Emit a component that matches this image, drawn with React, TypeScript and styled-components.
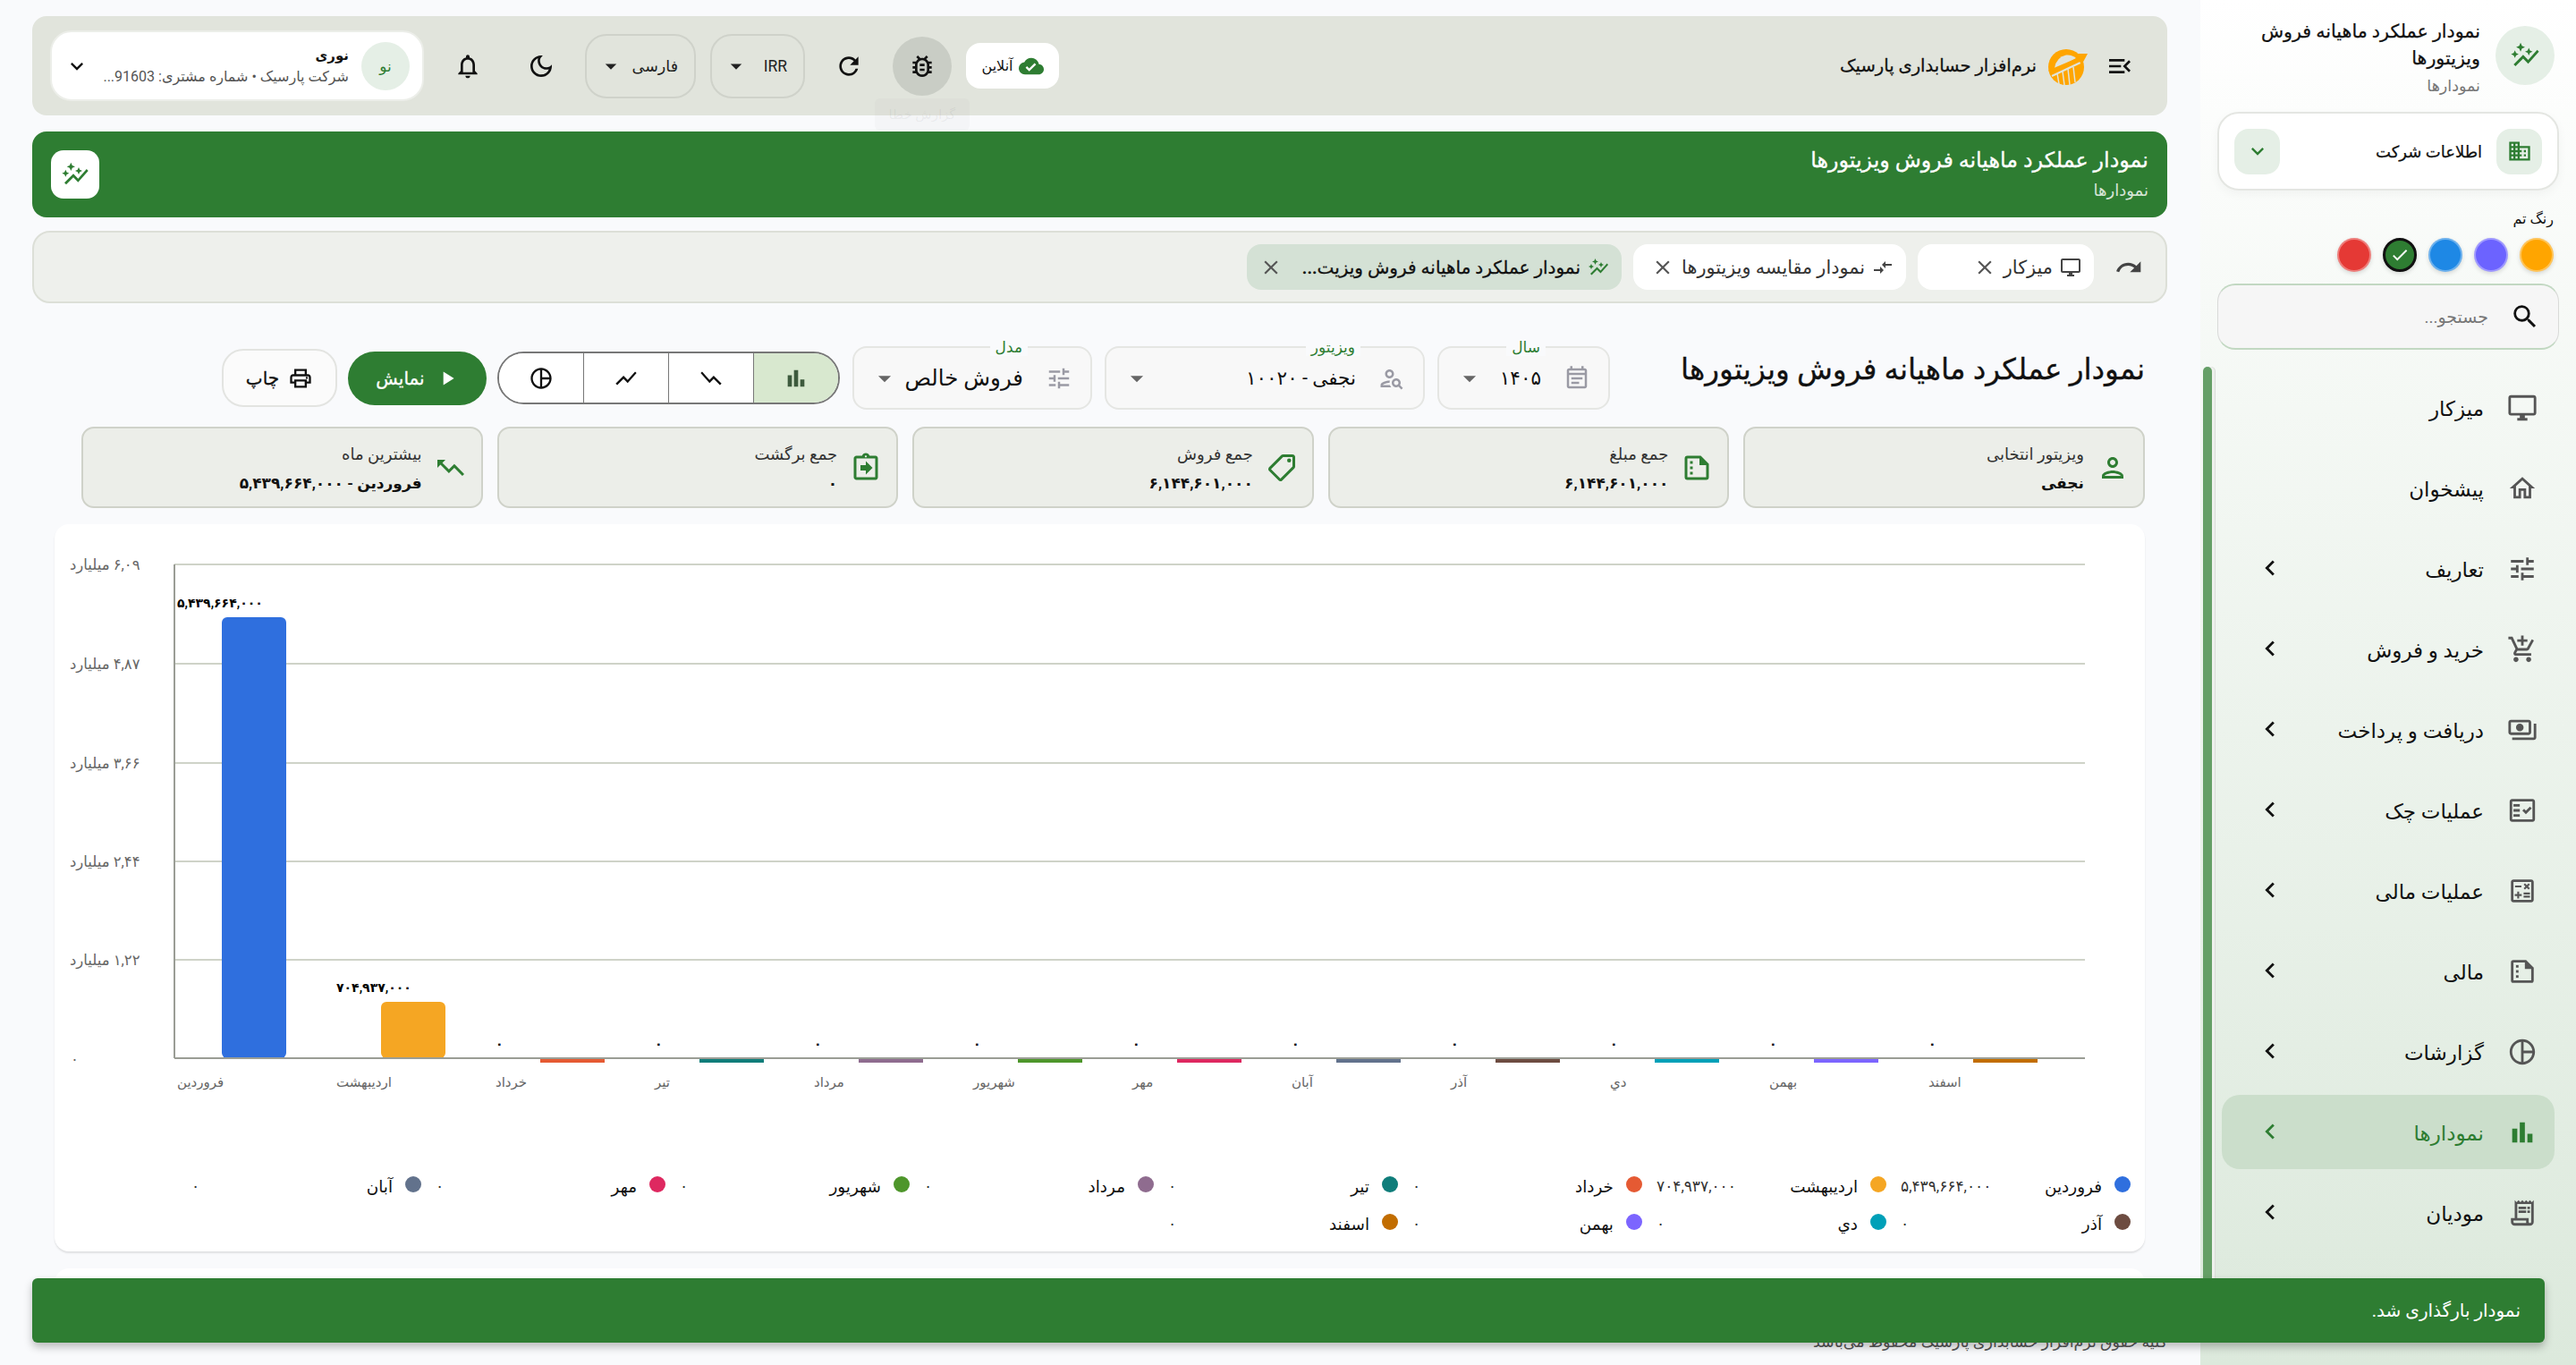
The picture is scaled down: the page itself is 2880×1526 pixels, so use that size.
import React from "react";
import styled, { createGlobalStyle } from "styled-components";
import {
  MdAutoGraph, MdBarChart, MdBusiness, MdCheck, MdChevronLeft, MdClose, MdCloudDone, MdCompareArrows,
  MdExpandMore, MdArrowDropDown, MdMenuOpen, MdNotificationsNone, MdOutlineAddShoppingCart, MdOutlineAssignmentReturn,
  MdOutlineBugReport, MdOutlineCalculate, MdOutlineDarkMode, MdOutlineDesktopWindows, MdOutlineEventNote, MdOutlineFactCheck,
  MdOutlineHome, MdOutlineLocalOffer, MdOutlinePayments, MdOutlinePerson, MdOutlinePersonSearch, MdOutlinePieChart,
  MdOutlinePrint, MdOutlineReceiptLong, MdOutlineTune, MdPlayArrow, MdRedo, MdRefresh, MdSearch,
  MdShowChart, MdTrendingUp, MdKeyboardArrowDown,
} from "react-icons/md";

const FONT = `Roboto, "Noto Sans", "DejaVu Sans", sans-serif`;

const Global = createGlobalStyle`
  html, body { margin: 0; padding: 0; height: 100%; background: #f9fafc; }
  body { font-family: ${FONT}; color: #111; overflow: hidden; }
  * { box-sizing: border-box; }
`;

const Page = styled.div`
  display: flex;
  width: 2880px;
  height: 1526px;
  overflow: hidden;
`;

/* ---------- Sidebar ---------- */
const Sidebar = styled.aside`
  width: 420px;
  height: 1526px;
  flex: none;
  background: linear-gradient(180deg, #ffffff 0%, #f4f8f4 30%, #dce9dc 100%);
  padding: 20px 19px 0 19px;
  display: flex;
  flex-direction: column;
`;
const BrandRow = styled.div`
  display: flex;
  gap: 17px;
  align-items: flex-start;
  padding: 9px 5px 0 0;
  height: 105px;
`;
const BrandCircle = styled.div`
  width: 66px;
  height: 66px;
  flex: none;
  border-radius: 50%;
  background: #e5efe6;
  color: #2e7d32;
  display: grid;
  place-items: center;
`;
const BrandText = styled.div`
  margin-top: -9px;
  width: 265px;
`;
const BrandTitle = styled.div`
  font-size: 20.6px;
  font-weight: 500;
  line-height: 30px;
  -webkit-text-stroke: 0.25px #111;
`;
const BrandSub = styled.div`
  font-size: 17.5px;
  line-height: 32px;
  color: #777;
`;
const CompanyCard = styled.div`
  height: 88px;
  background: #fff;
  border: 2px solid #e4e6e2;
  border-radius: 24px;
  box-shadow: 0 4px 12px rgba(0, 0, 0, 0.04);
  padding: 0 17px;
  display: flex;
  align-items: center;
  gap: 16px;
`;
const Tile = styled.div`
  width: 51px;
  height: 51px;
  border-radius: 16px;
  background: #e5efe6;
  color: #2e7d32;
  display: grid;
  place-items: center;
  flex: none;
`;
const CompanyName = styled.div`
  flex: 1;
  font-size: 18px;
  font-weight: 500;
  -webkit-text-stroke: 0.25px #111;
`;
const ThemeLabel = styled.div`
  font-size: 16px;
  line-height: 22px;
  margin: 21px 6px 0 0;
`;
const Swatches = styled.div`
  display: flex;
  gap: 13px;
  margin: 10px 6px 0 0;
`;
const Swatch = styled.div<{ $c: string; $on?: boolean }>`
  width: 38px;
  height: 38px;
  border-radius: 50%;
  background: ${(p) => p.$c};
  border: 2px solid ${(p) => (p.$on ? "#111" : "rgba(255,255,255,.35)")};
  ${(p) => (p.$on ? "border-width: 3px;" : "")}
  box-shadow: 0 2px 5px rgba(0, 0, 0, 0.14);
  display: grid;
  place-items: center;
  color: #fff;
`;
const SearchBox = styled.div`
  height: 74px;
  margin-top: 13px;
  border-radius: 20px;
  background: #f6f6f6;
  border: 1px solid #d9dad8;
  border-top: 2px solid #c2d8c2;
  border-bottom: 2px solid #c2d8c2;
  display: flex;
  align-items: center;
  gap: 24px;
  padding-right: 20px;
  color: #111;
`;
const SearchHint = styled.span`
  font-size: 19px;
  color: #777;
`;
const NavWrap = styled.nav`
  position: relative;
  margin: 19px 0 0 0;
  padding: 4px 5px 0 5px;
  flex: 1;
  display: flex;
  flex-direction: column;
  gap: 7px;
`;
const ScrollThumb = styled.div`
  position: absolute;
  left: -16px;
  top: 0;
  width: 10px;
  height: 1050px;
  border-radius: 5px;
  background: #659f66;
  box-shadow: 3px 0 0 #eef1ed, 4px 0 0 #d9dcd8;
`;
const NavItem = styled.div<{ $on?: boolean }>`
  height: 83px;
  flex: none;
  border-radius: 20px;
  background: ${(p) => (p.$on ? "#cbdecb" : "transparent")};
  color: ${(p) => (p.$on ? "#2e7d32" : "#111")};
  padding: 0 19px 0 37px;
  display: flex;
  align-items: center;
  gap: 26px;
`;
const NavIcon = styled.span<{ $on?: boolean }>`
  width: 34px;
  height: 34px;
  color: ${(p) => (p.$on ? "#2e7d32" : "#555")};
  flex: none;
  display: block;
`;
const NavLabel = styled.span`
  flex: 1;
  font-size: 23px;
  line-height: 30px;
  padding-top: 4px;
`;
const NavArrow = styled.span`
  width: 34px;
  height: 34px;
  flex: none;
  display: block;
  margin-top: -2px;
`;

/* ---------- Main ---------- */
const Main = styled.main`
  width: 2460px;
  flex: none;
  padding: 18px 37px 0 36px;
  display: flex;
  flex-direction: column;
  position: relative;
`;
const TopBar = styled.header`
  height: 111px;
  flex: none;
  background: #e1e4dc;
  border-radius: 16px;
  padding: 0 20px 0 20px;
  display: flex;
  align-items: center;
`;
const MenuBtn = styled.span`
  margin: 0 17px 0 20px;
  display: block;
  height: 32px;
`;
const AppName = styled.div`
  font-size: 19.5px;
  font-weight: 500;
  margin-right: 13px;
  white-space: nowrap;
  -webkit-text-stroke: 0.3px #111;
`;
const TopTools = styled.div`
  margin-right: auto;
  display: flex;
  align-items: center;
  gap: 16px;
`;
const OnlineChip = styled.div`
  width: 104px;
  height: 51px;
  background: #fff;
  border-radius: 16px;
  display: flex;
  align-items: center;
  justify-content: center;
  gap: 6px;
  font-size: 16px;
  color: #2e7d32;
`;
const ChipText = styled.span`
  color: #111;
`;
const RoundBtn = styled.div<{ $on?: boolean }>`
  width: 66px;
  height: 66px;
  border-radius: 50%;
  display: grid;
  place-items: center;
  background: ${(p) => (p.$on ? "#c9cdc5" : "transparent")};
  position: relative;
`;
const Tooltip = styled.div`
  position: absolute;
  top: 69px;
  left: -20px;
  width: 106px;
  height: 36px;
  background: rgba(120, 120, 120, 0.035);
  color: rgba(90, 90, 90, 0.08);
  font-size: 15px;
  display: grid;
  place-items: center;
  border-radius: 6px;
`;
const SelectPill = styled.div<{ $w: number }>`
  width: ${(p) => p.$w}px;
  height: 72px;
  border: 2px solid #cfd2ca;
  border-radius: 24px;
  display: flex;
  align-items: center;
  justify-content: space-between;
  padding: 0 18px 0 12px;
  font-size: 17.5px;
  color: #222;
`;
const UserCard = styled.div`
  width: 418px;
  height: 79px;
  background: #fff;
  border: 2px solid #eceee9;
  border-radius: 24px;
  display: flex;
  align-items: center;
  padding: 0 14px 0 14px;
  gap: 14px;
`;
const Avatar = styled.div`
  width: 54px;
  height: 54px;
  border-radius: 50%;
  background: #e5efe6;
  color: #2e7d32;
  font-size: 17px;
  font-weight: 500;
  display: grid;
  place-items: center;
  flex: none;
`;
const UserInfo = styled.div`
  flex: 1;
  min-width: 0;
`;
const UserName = styled.div`
  font-size: 15px;
  font-weight: 700;
  line-height: 24px;
`;
const UserSub = styled.div`
  font-size: 16px;
  line-height: 24px;
  color: #555;
  white-space: nowrap;
`;
const PageBanner = styled.section`
  height: 96px;
  margin-top: 18px;
  flex: none;
  background: #2e7d32;
  border-radius: 16px;
  color: #fff;
  padding: 0 21px;
  display: flex;
  align-items: center;
  justify-content: space-between;
`;
const BannerTitle = styled.div`
  font-size: 23.8px;
  font-weight: 500;
  line-height: 36px;
  -webkit-text-stroke: 0.3px #fff;
`;
const BannerSub = styled.div`
  font-size: 18px;
  line-height: 32px;
  opacity: 0.8;
`;
const BannerIcon = styled.div`
  width: 54px;
  height: 54px;
  border-radius: 14px;
  background: #fff;
  color: #2e7d32;
  display: grid;
  place-items: center;
`;
const TabsBar = styled.div`
  height: 81px;
  margin-top: 15px;
  flex: none;
  background: #eef0ec;
  border: 2px solid #dcdfd7;
  border-radius: 20px;
  display: flex;
  align-items: center;
  gap: 13px;
  padding: 0 25px;
`;
const RedoIcon = styled.span`
  display: block;
  height: 32px;
  margin-left: 10px;
  color: #444;
`;
const Tab = styled.div<{ $w: number; $on?: boolean }>`
  width: ${(p) => p.$w}px;
  height: 51px;
  border-radius: 16px;
  background: ${(p) => (p.$on ? "#d4e1d5" : "#fff")};
  color: ${(p) => (p.$on ? "#111" : "#333")};
  display: flex;
  align-items: center;
  gap: 8px;
  padding: 0 14px;
  font-size: ${(p) => (p.$on ? "20px" : "20.8px")};
  font-weight: ${(p) => (p.$on ? 500 : 400)};
  ${(p) => (p.$on ? "-webkit-text-stroke: 0.3px #111;" : "")}
  white-space: nowrap;
`;
const TabIcon = styled.span<{ $on?: boolean }>`
  display: block;
  height: 24px;
  color: ${(p) => (p.$on ? "#2e7d32" : "#444")};
`;
const TabClose = styled.span<{ $far?: boolean }>`
  display: block;
  height: 26px;
  margin-right: ${(p) => (p.$far ? "auto" : "0")};
  color: #555;
`;

const Content = styled.div`
  flex: 1;
  padding: 48px 25px 0 25px;
  display: flex;
  flex-direction: column;
`;
const TitleRow = styled.div`
  display: flex;
  align-items: center;
  gap: 80px;
  height: 71px;
  flex: none;
`;
const PageTitle = styled.h1`
  margin: -20px 0 0 0;
  font-size: 32.7px;
  font-weight: 500;
  width: 518px;
  flex: none;
  white-space: nowrap;
  -webkit-text-stroke: 0.3px #111;
`;
const Controls = styled.div`
  display: flex;
  align-items: center;
  gap: 14px;
`;
const Field = styled.div<{ $w: number }>`
  width: ${(p) => p.$w}px;
  height: 71px;
  flex: none;
  border: 2px solid #e5e6e3;
  border-radius: 16px;
  background: #f8f8f8;
  position: relative;
  display: flex;
  align-items: center;
  padding: 0 20px 0 17px;
  gap: 25px;
`;
const FieldLabel = styled.span`
  position: absolute;
  top: -11px;
  right: 76px;
  padding: 0 6px;
  margin-right: -6px;
  background: #f9fafc;
  font-size: 17px;
  line-height: 20px;
  color: #2e7d32;
`;
const FieldIcon = styled.span`
  display: block;
  height: 30px;
  color: #9a9aa4;
  flex: none;
`;
const FieldValue = styled.span<{ $large?: boolean }>`
  flex: 1;
  min-width: 0;
  white-space: nowrap;
  font-size: ${(p) => (p.$large ? "24.4px" : "21.5px")};
`;
const FieldArrow = styled.span`
  display: block;
  height: 34px;
  color: #666;
  flex: none;
`;
const ChartSwitch = styled.div`
  width: 383px;
  height: 59px;
  border: 2px solid #777;
  border-radius: 30px;
  overflow: hidden;
  display: flex;
  background: #fff;
`;
const SwitchCell = styled.div<{ $on?: boolean }>`
  flex: 1;
  background: ${(p) => (p.$on ? "#d8e8cf" : "#fff")};
  border-left: 1px solid #777;
  display: grid;
  place-items: center;
  color: ${(p) => (p.$on ? "#3d5a3d" : "#111")};
  &:last-child { border-left: none; }
`;
const Flip = styled.span`
  display: block;
  height: 28px;
  transform: scaleX(-1);
`;
const ShowBtn = styled.div`
  width: 155px;
  height: 60px;
  border-radius: 30px;
  background: #2e7d32;
  color: #fff;
  font-size: 20px;
  font-weight: 500;
  -webkit-text-stroke: 0.3px #fff;
  display: flex;
  align-items: center;
  justify-content: center;
  gap: 12px;
  margin-right: -2px;
`;
const PrintBtn = styled.div`
  width: 129px;
  height: 65px;
  border: 2px solid #e3e4e1;
  background: #fbfbfb;
  border-radius: 24px;
  font-size: 20px;
  font-weight: 500;
  -webkit-text-stroke: 0.3px #111;
  display: flex;
  align-items: center;
  justify-content: center;
  gap: 10px;
  margin-right: -2px;
`;
const KpiGrid = styled.div`
  display: grid;
  grid-template-columns: repeat(5, 1fr);
  gap: 16px;
  margin: 19px 0 0 30px;
  flex: none;
`;
const Kpi = styled.div`
  height: 91px;
  background: #eceee9;
  border: 2px solid #cfd2c9;
  border-radius: 14px;
  display: flex;
  align-items: center;
  gap: 14px;
  padding: 0 16px;
`;
const KpiIcon = styled.span<{ $flip?: boolean }>`
  display: block;
  height: 36px;
  color: #2e7d32;
  flex: none;
  transform: ${(p) => (p.$flip ? "scaleX(-1)" : "none")};
`;
const KpiText = styled.div`
  padding-top: 3px;
`;
const KpiLabel = styled.div`
  font-size: 18px;
  line-height: 33px;
  color: #333;
`;
const KpiValue = styled.div`
  font-size: 17px;
  font-weight: 700;
  line-height: 33px;
`;
const ChartCard = styled.section`
  height: 813px;
  margin-top: 18px;
  flex: none;
  background: #fff;
  border-radius: 16px;
  box-shadow: 0 2px 2px rgba(0, 0, 0, 0.1);
  position: relative;
`;
const ChartSvg = styled.svg`
  display: block;
  direction: ltr;
  font-family: ${FONT};
`;
const Legend = styled.div`
  display: grid;
  grid-template-columns: repeat(8, 257px);
  column-gap: 16px;
  row-gap: 14px;
  padding: 0 16px 0 0;
  margin-top: 66px;
`;
const LegendItem = styled.div`
  display: flex;
  align-items: center;
  height: 28px;
  font-size: 18.4px;
  color: #111;
`;
const LegendDot = styled.span<{ $c: string }>`
  width: 18px;
  height: 18px;
  border-radius: 50%;
  background: ${(p) => p.$c};
  margin: -4px 0 0 14px;
  flex: none;
`;
const LegendValue = styled.span`
  margin-right: auto;
  font-size: 17px;
  color: #333;
`;
const NextCard = styled.div`
  height: 60px;
  margin-top: 19px;
  flex: none;
  background: #fff;
  border-radius: 16px;
`;
const Footer = styled.footer`
  margin: 12px -25px 0 0;
  font-size: 17.4px;
  color: #555;
  white-space: nowrap;
`;
const Toast = styled.div`
  position: absolute;
  left: 36px;
  top: 1429px;
  width: 2809px;
  height: 72px;
  z-index: 5;
  background: #2e7d32;
  border-radius: 6px;
  box-shadow: 0 5px 10px rgba(0, 0, 0, 0.25);
  color: #fff;
  font-size: 20px;
  padding: 0 27px;
  display: flex;
  align-items: center;
`;

/* ---------- icons drawn by hand ---------- */
const DocDots = ({ size = 34 }: { size?: number }) => (
  <svg width={size} height={size} viewBox="0 0 24 24" fill="currentColor">
    <path d="M5 3h10l6 6v10a2 2 0 0 1-2 2H5a2 2 0 0 1-2-2V5a2 2 0 0 1 2-2zm0 2v14h14V10h-5V5H5z" />
    <rect x="7" y="7" width="2" height="2" />
    <rect x="7" y="11" width="2" height="2" />
    <rect x="7" y="15" width="2" height="2" />
  </svg>
);

const Logo = () => (
  <svg width="44" height="44" viewBox="0 0 44 44">
    <circle cx="20" cy="23" r="20" fill="#ffa500" />
    <path d="M7 24 Q9 12 20 9.500 Q27 9 31 13 L7 26 Z" fill="#e1e4dc" />
    <path d="M4 33 L38 17" stroke="#e1e4dc" strokeWidth="2" fill="none" />
    <path d="M12 42 L10 30 M18 43 L16 28 M24 43 L22 25 M30 40 L28 23" stroke="#e1e4dc" strokeWidth="1.500" fill="none" />
    <path d="M1 28 L34 14" stroke="#ffa500" strokeWidth="3.500" fill="none" />
    <polygon points="44,8 31,8 37,21" fill="#ffa500" />
  </svg>
);

/* ---------- data ---------- */
const nav = [
  { t: "میزکار", i: MdOutlineDesktopWindows },
  { t: "پیشخوان", i: MdOutlineHome },
  { t: "تعاریف", i: MdOutlineTune, a: 1 },
  { t: "خرید و فروش", i: MdOutlineAddShoppingCart, a: 1 },
  { t: "دریافت و پرداخت", i: MdOutlinePayments, a: 1 },
  { t: "عملیات چک", i: MdOutlineFactCheck, a: 1 },
  { t: "عملیات مالی", i: MdOutlineCalculate, a: 1 },
  { t: "مالی", i: DocDots, a: 1 },
  { t: "گزارشات", i: MdOutlinePieChart, a: 1 },
  { t: "نمودارها", i: MdBarChart, a: 1, on: 1 },
  { t: "مودیان", i: MdOutlineReceiptLong, a: 1 },
];
const months = [
  { n: "فروردین", c: "#2f6fde", v: "۵,۴۳۹,۶۶۴,۰۰۰", h: 493 },
  { n: "اردیبهشت", c: "#f5a623", v: "۷۰۴,۹۳۷,۰۰۰", h: 63 },
  { n: "خرداد", c: "#e55a33", v: "۰", h: 0 },
  { n: "تیر", c: "#0f7d7a", v: "۰", h: 0 },
  { n: "مرداد", c: "#8f6c8f", v: "۰", h: 0 },
  { n: "شهریور", c: "#4e962b", v: "۰", h: 0 },
  { n: "مهر", c: "#de2860", v: "۰", h: 0 },
  { n: "آبان", c: "#62728c", v: "۰", h: 0 },
  { n: "آذر", c: "#6d4c41", v: "۰", h: 0 },
  { n: "دي", c: "#00a0b8", v: "۰", h: 0 },
  { n: "بهمن", c: "#7c65ff", v: "۰", h: 0 },
  { n: "اسفند", c: "#c26d00", v: "۰", h: 0 },
];
const yTicks = [
  { y: 45, t: "۶,۰۹ میلیارد" },
  { y: 156, t: "۴,۸۷ میلیارد" },
  { y: 267, t: "۳,۶۶ میلیارد" },
  { y: 377, t: "۲,۴۴ میلیارد" },
  { y: 487, t: "۱,۲۲ میلیارد" },
];
const kpis = [
  { l: "ویزیتور انتخابی", v: "نجفی", i: MdOutlinePerson },
  { l: "جمع مبلغ", v: "۶,۱۴۴,۶۰۱,۰۰۰", i: DocDots },
  { l: "جمع فروش", v: "۶,۱۴۴,۶۰۱,۰۰۰", i: MdOutlineLocalOffer, f: 1 },
  { l: "جمع برگشت", v: "۰", i: MdOutlineAssignmentReturn, f: 1 },
  { l: "بیشترین ماه", v: "فروردین - ۵,۴۳۹,۶۶۴,۰۰۰", i: MdTrendingUp, f: 1 },
];

const PlotChart = () => {
  const ox = 135, base = 597, band = 178;
  return (
    <ChartSvg width="2338" height="660" viewBox="0 0 2338 660">
      {[45, 156, 267, 377, 487].map((y) => (
        <line key={y} x1={ox} x2={2271} y1={y} y2={y} stroke="#cfd3c8" strokeWidth="2" />
      ))}
      <line x1={ox} x2={ox} y1={45} y2={base} stroke="#9a9d95" strokeWidth="2" />
      {yTicks.map((t) => (
        <text key={t.y} x={18} y={t.y + 6} fontSize="16.500" fill="#666" direction="rtl" textAnchor="end">{t.t}</text>
      ))}
      <text x={19} y={604} fontSize="16.500" fill="#666">۰</text>
      {months.map((m, i) => {
        const cx = ox + band * i + band / 2;
        const start = ox + band * i + 3;
        return (
          <g key={m.n}>
            {m.h > 0 ? (
              <rect x={cx - 36} y={base - m.h} width={72} height={m.h} rx={6} fill={m.c} />
            ) : (
              <rect x={cx - 36} y={base} width={72} height={5} fill={m.c} />
            )}
            <text x={start} y={m.h > 0 ? base - m.h - 11 : 586} fontSize="14" fontWeight="700" fill="#000" direction="rtl" textAnchor="end">{m.v}</text>
            <text x={start} y={629} fontSize="15" fill="#666" direction="rtl" textAnchor="end">{m.n}</text>
          </g>
        );
      })}
      <line x1={ox} x2={2271} y1={base} y2={base} stroke="#9a9d95" strokeWidth="2" />
    </ChartSvg>
  );
};

export default function App() {
  return (
    <Page dir="rtl">
      <Global />
      <Sidebar>
        <BrandRow>
          <BrandCircle><MdAutoGraph size={34} /></BrandCircle>
          <BrandText>
            <BrandTitle>نمودار عملکرد ماهیانه فروش ویزیتورها</BrandTitle>
            <BrandSub>نمودارها</BrandSub>
          </BrandText>
        </BrandRow>
        <CompanyCard>
          <Tile><MdBusiness size={28} /></Tile>
          <CompanyName>اطلاعات شرکت</CompanyName>
          <Tile><MdExpandMore size={28} /></Tile>
        </CompanyCard>
        <ThemeLabel>رنگ تم</ThemeLabel>
        <Swatches>
          <Swatch $c="#ffa500" />
          <Swatch $c="#6c63ff" />
          <Swatch $c="#1e88e5" />
          <Swatch $c="#2e7d32" $on><MdCheck size={22} /></Swatch>
          <Swatch $c="#e53935" />
        </Swatches>
        <SearchBox>
          <MdSearch size={34} />
          <SearchHint>جستجو...</SearchHint>
        </SearchBox>
        <NavWrap>
          <ScrollThumb />
          {nav.map((n) => {
            const I = n.i;
            return (
              <NavItem key={n.t} $on={!!n.on}>
                <NavIcon $on={!!n.on}><I size={34} /></NavIcon>
                <NavLabel>{n.t}</NavLabel>
                {n.a ? <NavArrow><MdChevronLeft size={34} /></NavArrow> : null}
              </NavItem>
            );
          })}
        </NavWrap>
      </Sidebar>
      <Main>
        <TopBar>
          <MenuBtn><MdMenuOpen size={32} /></MenuBtn>
          <Logo />
          <AppName>نرم‌افزار حسابداری پارسیک</AppName>
          <TopTools>
            <OnlineChip>
              <MdCloudDone size={28} />
              <ChipText>آنلاین</ChipText>
            </OnlineChip>
            <RoundBtn $on>
              <MdOutlineBugReport size={32} />
              <Tooltip>گزارش خطا</Tooltip>
            </RoundBtn>
            <RoundBtn><MdRefresh size={32} /></RoundBtn>
            <SelectPill $w={106}>IRR<MdArrowDropDown size={30} /></SelectPill>
            <SelectPill $w={124}>فارسی<MdArrowDropDown size={30} /></SelectPill>
            <RoundBtn><MdOutlineDarkMode size={32} /></RoundBtn>
            <RoundBtn><MdNotificationsNone size={32} /></RoundBtn>
            <UserCard>
              <Avatar>نو</Avatar>
              <UserInfo>
                <UserName>نوری</UserName>
                <UserSub>شرکت پارسیک • شماره مشتری: 91603...</UserSub>
              </UserInfo>
              <MdKeyboardArrowDown size={28} />
            </UserCard>
          </TopTools>
        </TopBar>
        <PageBanner>
          <div>
            <BannerTitle>نمودار عملکرد ماهیانه فروش ویزیتورها</BannerTitle>
            <BannerSub>نمودارها</BannerSub>
          </div>
          <BannerIcon><MdAutoGraph size={32} /></BannerIcon>
        </PageBanner>
        <TabsBar>
          <RedoIcon><MdRedo size={32} /></RedoIcon>
          <Tab $w={197}>
            <TabIcon><MdOutlineDesktopWindows size={24} /></TabIcon>
            میزکار
            <TabClose><MdClose size={26} /></TabClose>
          </Tab>
          <Tab $w={305}>
            <TabIcon><MdCompareArrows size={24} /></TabIcon>
            نمودار مقایسه ویزیتورها
            <TabClose><MdClose size={26} /></TabClose>
          </Tab>
          <Tab $w={419} $on>
            <TabIcon $on><MdAutoGraph size={24} /></TabIcon>
            نمودار عملکرد ماهیانه فروش ویزیت...
            <TabClose $far><MdClose size={26} /></TabClose>
          </Tab>
        </TabsBar>
        <Content>
          <TitleRow>
            <PageTitle>نمودار عملکرد ماهیانه فروش ویزیتورها</PageTitle>
            <Controls>
              <Field $w={193}>
                <FieldLabel>سال</FieldLabel>
                <FieldIcon><MdOutlineEventNote size={30} /></FieldIcon>
                <FieldValue>۱۴۰۵</FieldValue>
                <FieldArrow><MdArrowDropDown size={34} /></FieldArrow>
              </Field>
              <Field $w={358}>
                <FieldLabel>ویزیتور</FieldLabel>
                <FieldIcon><MdOutlinePersonSearch size={30} /></FieldIcon>
                <FieldValue>نجفی - ۱۰۰۲۰</FieldValue>
                <FieldArrow><MdArrowDropDown size={34} /></FieldArrow>
              </Field>
              <Field $w={268}>
                <FieldLabel>مدل</FieldLabel>
                <FieldIcon><MdOutlineTune size={30} /></FieldIcon>
                <FieldValue $large>فروش خالص</FieldValue>
                <FieldArrow><MdArrowDropDown size={34} /></FieldArrow>
              </Field>
              <ChartSwitch>
                <SwitchCell $on><MdBarChart size={28} /></SwitchCell>
                <SwitchCell><Flip><MdShowChart size={28} /></Flip></SwitchCell>
                <SwitchCell><MdShowChart size={28} /></SwitchCell>
                <SwitchCell><MdOutlinePieChart size={28} /></SwitchCell>
              </ChartSwitch>
              <ShowBtn><MdPlayArrow size={26} />نمایش</ShowBtn>
              <PrintBtn><MdOutlinePrint size={28} />چاپ</PrintBtn>
            </Controls>
          </TitleRow>
          <KpiGrid>
            {kpis.map((k) => {
              const I = k.i;
              return (
                <Kpi key={k.l}>
                  <KpiIcon $flip={!!k.f}><I size={36} /></KpiIcon>
                  <KpiText>
                    <KpiLabel>{k.l}</KpiLabel>
                    <KpiValue>{k.v}</KpiValue>
                  </KpiText>
                </Kpi>
              );
            })}
          </KpiGrid>
          <ChartCard>
            <PlotChart />
            <Legend>
              {months.map((m) => (
                <LegendItem key={m.n}>
                  <LegendDot $c={m.c} />
                  {m.n}
                  <LegendValue>{m.v}</LegendValue>
                </LegendItem>
              ))}
            </Legend>
          </ChartCard>
          <NextCard />
          <Footer>کلیه حقوق نرم‌افزار حسابداری پارسیک محفوظ می‌باشد</Footer>
        </Content>
        <Toast>نمودار بارگذاری شد.</Toast>
      </Main>
    </Page>
  );
}
